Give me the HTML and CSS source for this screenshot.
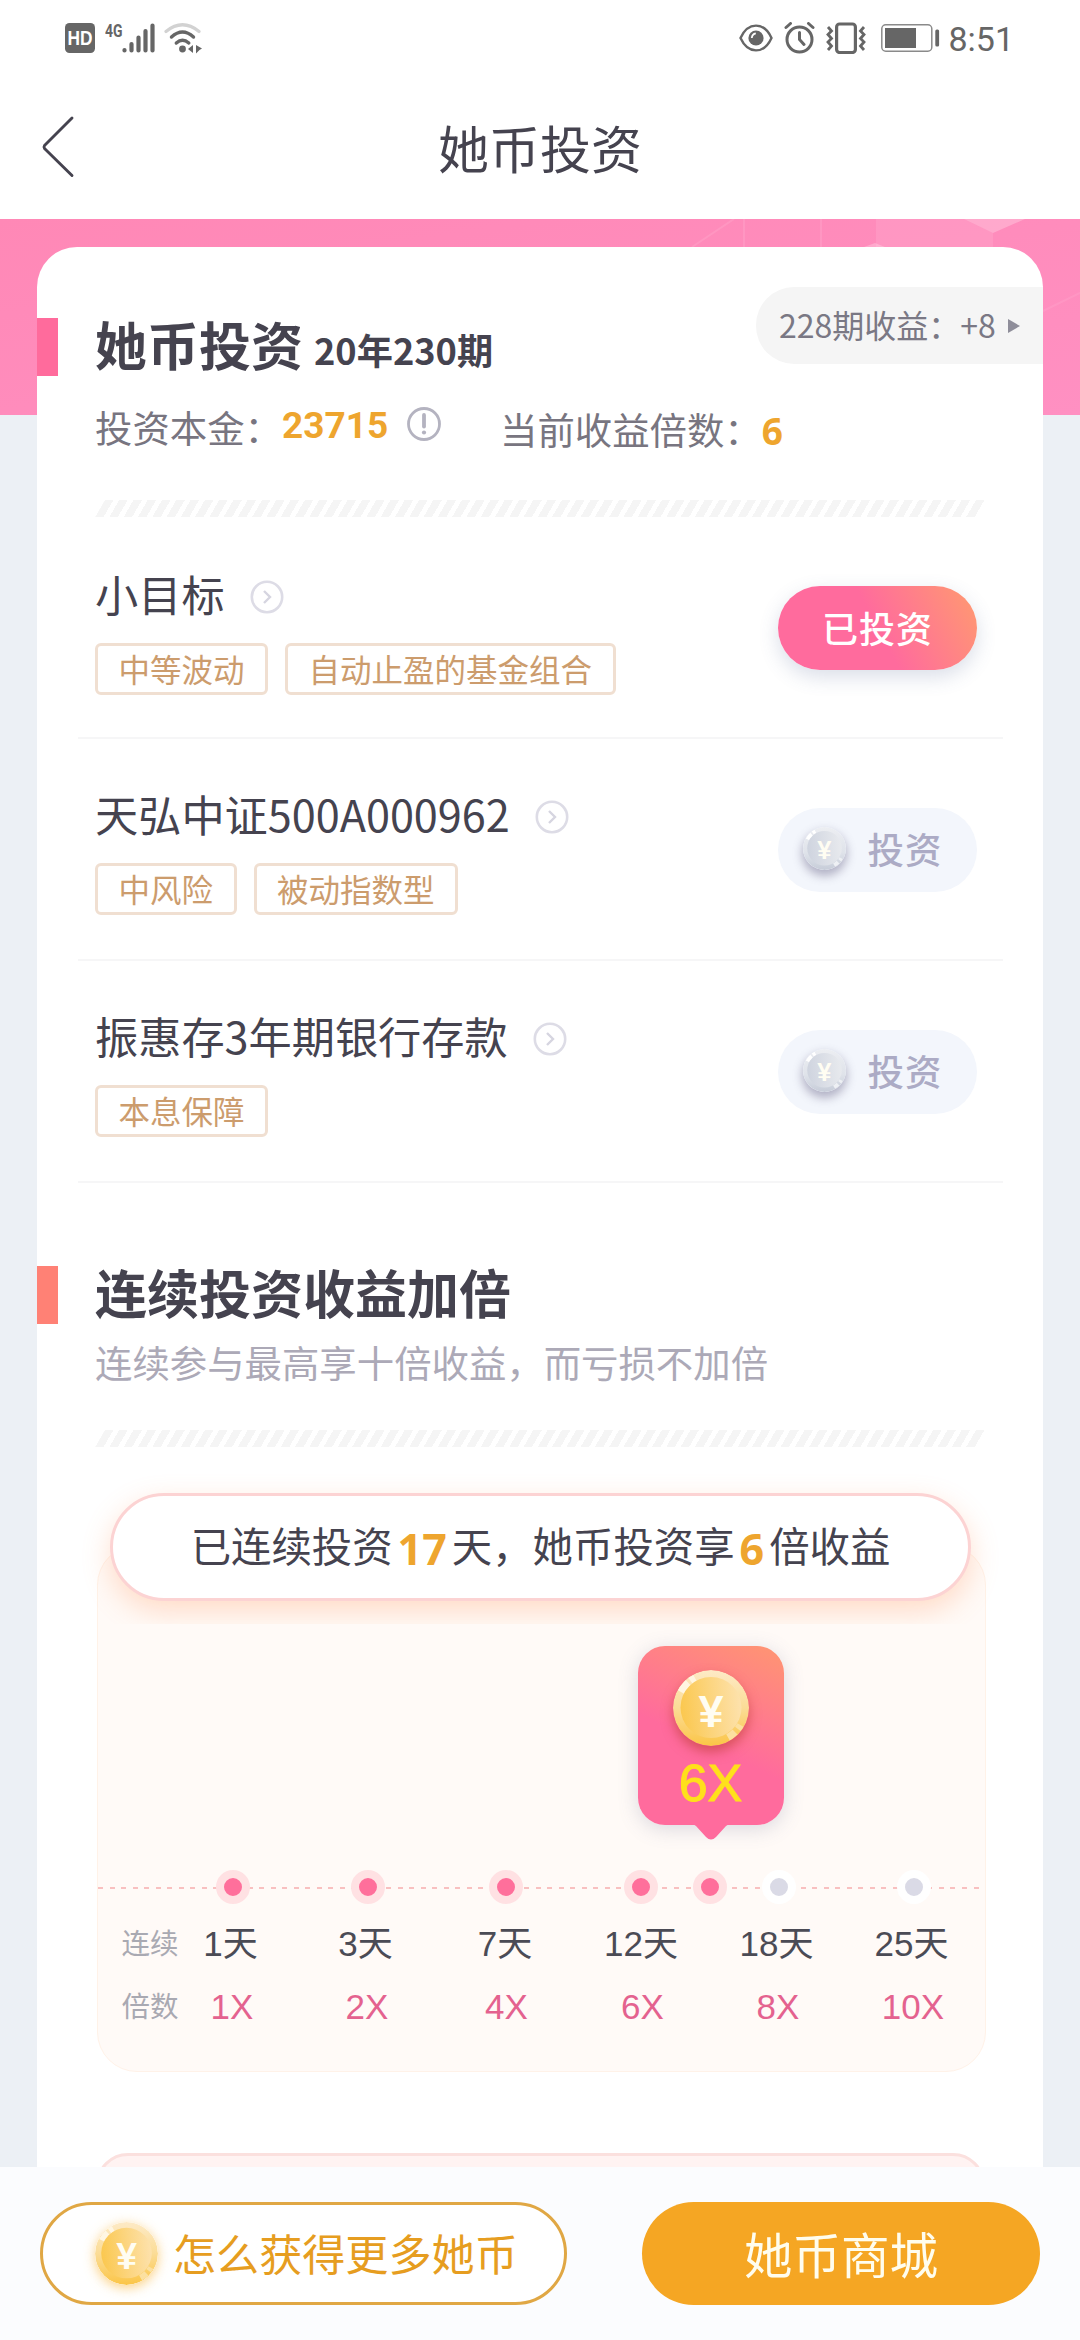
FILE: index.html
```html
<!DOCTYPE html>
<html lang="zh-CN">
<head>
<meta charset="utf-8">
<title>她币投资</title>
<link rel="stylesheet" href="styles.css">
</head>
<body>
<svg class="defs" width="0" height="0" aria-hidden="true">
  <defs>
    <linearGradient id="gold-rim" x1="0" y1="0" x2="0" y2="1"><stop offset="0" stop-color="#fdeac6"/><stop offset=".5" stop-color="#fbdc96"/><stop offset="1" stop-color="#fbc546"/></linearGradient>
    <linearGradient id="gold-face" x1="0" y1=".4" x2="1" y2=".3"><stop offset="0" stop-color="#fbc850"/><stop offset="1" stop-color="#fde2ae"/></linearGradient>
    <linearGradient id="silver-rim" x1="0" y1="0" x2="0" y2="1"><stop offset="0" stop-color="#eceef2"/><stop offset=".6" stop-color="#dfe3ea"/><stop offset="1" stop-color="#c6ccd8"/></linearGradient>
    <linearGradient id="silver-face" x1="0" y1=".4" x2="1" y2=".3"><stop offset="0" stop-color="#cfd4df"/><stop offset="1" stop-color="#e8eaee"/></linearGradient>
    <symbol id="coin-gold" viewBox="0 0 76 76">
      <circle cx="38" cy="38" r="38" fill="url(#gold-rim)"/>
      <path d="M8 22A34 34 0 0 1 15.200 12.700M17.500 10.800A34 34 0 0 1 22 8" fill="none" stroke="#fff6e2" stroke-width="7"/>
      <path d="M67.400 55A34 34 0 0 1 64.800 58.900M62 62A34 34 0 0 1 55 67.400" fill="none" stroke="#fce0a0" stroke-width="7"/>
      <circle cx="38" cy="37.500" r="30.500" fill="url(#gold-face)"/>
      <text class="coin-mark" x="38" y="56.500" text-anchor="middle">¥</text>
    </symbol>
    <symbol id="coin-silver" viewBox="0 0 76 76">
      <circle cx="38" cy="38" r="38" fill="url(#silver-rim)"/>
      <path d="M8 22A34 34 0 0 1 15.200 12.700M17.500 10.800A34 34 0 0 1 22 8" fill="none" stroke="#fff" stroke-width="7"/>
      <path d="M67.400 55A34 34 0 0 1 64.800 58.900M62 62A34 34 0 0 1 55 67.400" fill="none" stroke="#eef0f4" stroke-width="7"/>
      <circle cx="38" cy="37.500" r="30.500" fill="url(#silver-face)"/>
      <text class="coin-mark" x="38" y="56.500" text-anchor="middle">¥</text>
    </symbol>
    <symbol id="chevron-circle" viewBox="0 0 34 34">
      <circle cx="17" cy="17" r="15.200" fill="none" stroke="#dddce6" stroke-width="2.600"/>
      <path d="M14 11l6 6-6 6" fill="none" stroke="#d6d5e0" stroke-width="2.400"/>
    </symbol>
  </defs>
</svg>

<header class="status">
  <div class="status-left">
    <svg class="i-hd" width="30" height="30" viewBox="0 0 30 30"><rect width="30" height="30" rx="4.500" fill="#666"/><text class="hd-text" x="15" y="22" text-anchor="middle" textLength="25" lengthAdjust="spacingAndGlyphs">HD</text></svg>
    <svg class="i-signal" width="51" height="36" viewBox="0 -4 51 36"><text class="net-text" x="0" y="14.500" textLength="17.500" lengthAdjust="spacingAndGlyphs">4G</text><g stroke="#666" stroke-width="4.200" stroke-linecap="round"><path d="M19.500 28v.5M26.500 22v6.500M33.500 15.500v13M40.500 9v19.500M47.500 3.500v25"/></g></svg>
    <svg class="i-wifi" width="38" height="32" viewBox="0 0 38 32" fill="none" stroke-linecap="round"><path d="M2 9.500Q18.500-4 35 9.500" stroke="#d2d2d2" stroke-width="3.200"/><path d="M7.500 15Q18.500 5 29.500 15" stroke="#666" stroke-width="3.400"/><path d="M12.300 21Q18.500 15.500 24.800 21" stroke="#666" stroke-width="3.400"/><circle cx="18.500" cy="27" r="3.400" fill="#666"/><path d="M29 23v8l-5-4zM32 23l6 3.500-2.500 1.500-3.500 3.500z" fill="#666"/></svg>
  </div>
  <div class="status-right">
    <svg class="i-eye" width="34" height="28" viewBox="0 0 34 28"><path d="M1.500 14C9-2.500 25-2.500 32.500 14 25 30.500 9 30.500 1.500 14z" fill="none" stroke="#666" stroke-width="2.400"/><circle cx="17" cy="14" r="7.600" fill="#666"/><path d="M12.800 14q.4-4 4-4.600" fill="none" stroke="#fff" stroke-width="1.800"/></svg>
    <svg class="i-alarm" width="31" height="32" viewBox="0 0 31 32" fill="none" stroke="#666" stroke-width="3" stroke-linecap="round"><circle cx="15.500" cy="17.500" r="12.500"/><path d="M15.500 10.500v7l4.500 5M2 5.500l4.500-4M29 5.500l-4.500-4"/></svg>
    <svg class="i-vibrate" width="40" height="32" viewBox="0 0 40 32" fill="none" stroke="#666" stroke-width="3.200"><rect x="10.600" y="2" width="18.800" height="28.500" rx="3"/><path d="M2 5l3.500 4-3.500 3.500 3.500 4-3.500 3.500 3.500 4-3.500 4M38 5l-3.500 4 3.500 3.500-3.500 4 3.500 3.500-3.500 4 3.500 4" stroke-width="2.800"/></svg>
    <svg class="i-battery" width="59" height="28" viewBox="0 0 59 28"><rect x=".8" y=".8" width="50" height="26.400" rx="4" fill="none" stroke="#8a8a8a" stroke-width="1.500"/><rect x="4" y="4" width="31" height="20" fill="#666"/><rect x="54.300" y="5.500" width="3.800" height="17" rx="1.500" fill="#666"/></svg>
    <span class="clock">8:51</span>
  </div>
</header>

<nav class="nav">
  <svg class="back" width="34" height="64" viewBox="0 0 34 64" fill="none" stroke="#45434f" stroke-width="2.900" stroke-linecap="round" stroke-linejoin="round"><path d="M31 3L3.500 30.500Q2.500 32 3.500 33.500L31 60.500"/></svg>
  <h1 class="nav-title">她币投资</h1>
</nav>

<main class="page">
  <svg class="page-pattern" width="1080" height="196" viewBox="0 0 1080 196"><path d="M876 0h88l29 14v14H876z" fill="#fff" fill-opacity=".1"/><path d="M964 0h61l-32 14z" fill="#fff" fill-opacity=".26"/><path d="M864 28l11-4 10 4z" fill="#fff" fill-opacity=".25"/><path d="M692 28L734 0M744 0v28M821 0v28" stroke="#fff" stroke-opacity=".1" stroke-width="2"/><path d="M1043 92l37-18" stroke="#fff" stroke-opacity=".08" stroke-width="2"/></svg>
  <section class="card">
    <div class="card-head">
      <div class="heading heading-pink"><h2>她币投资</h2><span class="period">20年230期</span></div>
      <a class="last-gain"><span>228期收益：+8</span><svg width="12" height="16" viewBox="0 0 12 16"><path d="M0 1l12 7-12 7z" fill="#8f8e9a"/></svg></a>
    </div>
    <div class="facts">
      <div class="fact fact-principal"><span>投资本金：</span><b class="roboto">23715</b><svg width="36" height="36" viewBox="0 0 36 36"><circle cx="18" cy="18" r="15.500" fill="none" stroke="#b4b3c0" stroke-width="2.800"/><path d="M18 9v11.500" stroke="#b4b3c0" stroke-width="3.800" stroke-linecap="round"/><circle cx="18" cy="26.500" r="2.100" fill="#b4b3c0"/></svg></div>
      <div class="fact fact-multiple"><span>当前收益倍数：</span><b>6</b></div>
    </div>
    <div class="hatch"></div>

    <ul class="funds">
      <li class="fund">
        <div class="fund-info">
          <div class="fund-name"><h3>小目标</h3><svg width="34" height="34"><use href="#chevron-circle"/></svg></div>
          <div class="tags"><span>中等波动</span><span>自动止盈的基金组合</span></div>
        </div>
        <a class="invest invested">已投资</a>
      </li>
      <li class="fund">
        <div class="fund-info">
          <div class="fund-name"><h3>天弘中证500A000962</h3><svg width="34" height="34"><use href="#chevron-circle"/></svg></div>
          <div class="tags"><span>中风险</span><span>被动指数型</span></div>
        </div>
        <a class="invest"><svg class="coin-small" width="43" height="43"><use href="#coin-silver"/></svg>投资</a>
      </li>
      <li class="fund">
        <div class="fund-info">
          <div class="fund-name"><h3>振惠存3年期银行存款</h3><svg width="34" height="34"><use href="#chevron-circle"/></svg></div>
          <div class="tags"><span>本息保障</span></div>
        </div>
        <a class="invest"><svg class="coin-small" width="43" height="43"><use href="#coin-silver"/></svg>投资</a>
      </li>
    </ul>

    <div class="heading heading-coral"><h2>连续投资收益加倍</h2></div>
    <p class="note">连续参与最高享十倍收益，而亏损不加倍</p>
    <div class="hatch"></div>

    <div class="banner-wrap">
      <div class="banner"><span>已连续投资</span><b>17</b><span>天，她币投资享</span><b>6</b><span>倍收益</span></div>
    </div>
    <div class="streak">
      <div class="track">
        <i class="dot on" style="left:135px"></i>
        <i class="dot on" style="left:270px"></i>
        <i class="dot on" style="left:408px"></i>
        <i class="dot on" style="left:543px"></i>
        <i class="dot on" style="left:612px"></i>
        <i class="dot" style="left:681px"></i>
        <i class="dot" style="left:816px"></i>
        <div class="bubble">
          <svg width="76" height="76"><use href="#coin-gold"/></svg>
          <span>6X</span>
          <svg class="tail" width="40" height="17" viewBox="0 0 40 17"><path d="M0 0h40q-3 0-5 2L25 13q-5 5-10 0L5 2Q3 0 0 0z" fill="#ff6b9d"/></svg>
        </div>
      </div>
      <div class="steps days"><em>连续</em><span>1天</span><span>3天</span><span>7天</span><span>12天</span><span>18天</span><span>25天</span></div>
      <div class="steps rates"><em>倍数</em><span>1X</span><span>2X</span><span>4X</span><span>6X</span><span>8X</span><span>10X</span></div>
    </div>
    <div class="next-panel"></div>
  </section>
</main>

<footer class="actions">
  <a class="action action-earn"><svg width="63" height="63"><use href="#coin-gold"/></svg><span>怎么获得更多她币</span></a>
  <a class="action action-mall">她币商城</a>
</footer>
</body>
</html>
```
FILE: styles.css
```css
* { box-sizing: border-box; margin: 0; padding: 0; }
body {
  width: 1080px;
  height: 2340px;
  overflow: hidden;
  display: flex;
  flex-direction: column;
  background: #fff;
  color: #45434f;
  font-family: "Noto Sans CJK SC", "Noto Sans", sans-serif;
}
h1, h2, h3 { font-weight: 400; }
svg { display: block; flex: none; }
b, em, i { font-style: normal; }
ul { list-style: none; }
.defs { position: absolute; }
.coin-mark { font: 700 45px "Liberation Sans", sans-serif; fill: #fffdf2; }

/* status bar */
.status { height: 72px; flex: none; display: flex; justify-content: space-between; align-items: flex-start; padding: 22px 66px 0 65px; }
.status-left, .status-right { display: flex; align-items: flex-start; }
.i-hd { margin-top: 1px; }
.hd-text { font: 700 20px "Liberation Sans", sans-serif; fill: #fff; }
.i-signal { margin: -4px 0 0 10px; }
.net-text { font: 700 19px Roboto, sans-serif; fill: #666; }
.i-wifi { margin-left: 8px; }
.i-eye { margin-top: 2px; }
.i-alarm { margin-left: 11px; }
.i-vibrate { margin-left: 11px; }
.i-battery { margin: 2px 0 0 15px; }
.clock { margin-left: 8px; font: 400 34px/35px Roboto, sans-serif; color: #666; }

/* navigation */
.nav { height: 147px; flex: none; position: relative; display: flex; justify-content: center; }
.back { position: absolute; left: 41px; top: 43px; }
.nav-title { font-size: 51px; line-height: 74px; margin-top: 38px; }

/* page body */
.page {
  height: 1948px;
  flex: none;
  position: relative;
  overflow: hidden;
  padding: 28px 37px 0;
  background: linear-gradient(170deg, #ff88b6, #ff90c2) 0 0 / 100% 196px no-repeat #ecf0f5;
}
.page-pattern { position: absolute; left: 0; top: 0; }
.card { position: relative; height: 1990px; background: #fff; border-radius: 40px 40px 0 0; }
.card-head { display: flex; justify-content: space-between; align-items: flex-start; padding-top: 40px; }
.heading { display: flex; height: 58px; padding-left: 37px; border-left: 21px solid; }
.heading h2 { font-size: 52px; line-height: 51px; font-weight: 700; color: #45434f; }
.heading-pink { border-color: #ff6b9c; margin-top: 31px; }
.heading-coral { border-color: #ff8175; margin-top: 83px; }
.period { font-size: 36.200px; line-height: 62px; font-weight: 700; margin-left: 11px; }
.last-gain {
  display: flex;
  align-items: center;
  height: 77px;
  width: 287px;
  padding-left: 23px;
  border-radius: 38px 0 0 38px;
  background: #f5f5f5;
  color: #7a7884;
  font-size: 32px;
  line-height: 72px;
}
.last-gain span { width: 229px; white-space: nowrap; margin-top: -4px; }
.facts { display: flex; height: 124px; padding: 25px 0 0 58px; font-size: 37.400px; line-height: 53px; color: #787580; }
.fact { display: flex; }
.fact-principal { width: 405px; }
.fact-principal svg { margin: 5px 0 0 18px; }
.fact-multiple { padding-top: 2px; }
.fact b { color: #eea52e; font: 700 37px/55px "Noto Sans", sans-serif; }
.fact .roboto { font-family: Roboto, sans-serif; line-height: 49px; }
.hatch {
  width: 880px;
  height: 17px;
  margin-left: 63px;
  transform: skewX(-30deg);
  background: repeating-linear-gradient(90deg, #f5f5f5 0 8.500px, #fff 8.500px 14.280px);
}

/* fund list */
.fund { display: flex; justify-content: space-between; height: 222px; margin: 0 40px 0 41px; padding: 50px 26px 0 17px; border-bottom: 2px solid #f6f6f7; }
.fund-name { display: flex; height: 52px; }
.fund-name h3 { font-size: 43.200px; line-height: 52px; }
.fund-name svg { margin: 13px 0 0 25px; }
.fund + .fund .fund-info { margin-top: -2px; }
.tags { display: flex; gap: 17px; margin-top: 24px; }
.tags span { height: 52px; padding: 0 20.500px; border: 3px solid #f0dfd1; border-radius: 6px; font-size: 31.500px; line-height: 45px; color: #cc9c6d; }
.invest {
  display: flex;
  align-items: center;
  justify-content: center;
  width: 199px;
  height: 84px;
  margin-top: 19px;
  padding-right: 10px;
  border-radius: 42px;
  background: #f3f6fc;
  color: #acabc5;
  font-size: 36.500px;
  line-height: 76px;
  padding-bottom: 2px;
  font-weight: 500;
  letter-spacing: 1px;
}
.invested { padding-right: 0; font-size: 36px; background: linear-gradient(62deg, #ff6b9d 50%, #ff9674 95%); color: #fff; box-shadow: 0 7px 20px rgba(70, 90, 140, .2); }
.coin-small { margin: -2px 22px 0 0; border-radius: 50%; box-shadow: 0 5px 10px 1px rgba(100, 95, 130, .45); }

/* streak section */
.note { margin: 9px 0 0 58px; height: 97px; font-size: 37.400px; line-height: 59px; color: #aca9b7; }
.banner-wrap { position: relative; z-index: 1; height: 177px; overflow: hidden; padding: 46px 73px 0; }
.banner {
  display: flex;
  align-items: center;
  justify-content: center;
  height: 108px;
  width: 861px;
  border: 3px solid #fcd3d3;
  border-radius: 54px;
  background: #fff;
  box-shadow: 0 10px 28px rgba(255, 150, 90, .3);
  font-size: 40.400px;
  line-height: 96px;
}
.banner span { margin-top: -5px; }
.banner b { font: 700 43px/60px "Noto Sans", sans-serif; color: #eea52e; margin: 3px 5px 0; }
.streak {
  height: 527px;
  width: 889px;
  margin: -79px 0 0 59.500px;
  padding-top: 324px;
  border: 1.500px solid #fff2e8;
  border-radius: 40px;
  background: #fffaf7;
}
.track { position: relative; height: 34px; background: repeating-linear-gradient(90deg, #f9c0c0 0 5px, transparent 5px 11.520px) 0 17px / 100% 2px no-repeat; }
.dot { position: absolute; top: 0; width: 34px; height: 34px; margin-left: -17px; border-radius: 50%; border: 8px solid #fff; background: #dadae6; }
.on { border-color: #ffe1e3; background: #ff6f9b; }
.bubble {
  position: absolute;
  left: 540px;
  top: -224px;
  width: 146px;
  height: 179px;
  border-radius: 27px;
  background: linear-gradient(25deg, #ff6b9d 45%, #ff9275 95%);
  box-shadow: 0 4px 20px rgba(90, 100, 140, .22);
  display: flex;
  flex-direction: column;
  align-items: center;
  padding-top: 24px;
}
.bubble > svg:first-child { border-radius: 50%; box-shadow: 0 6px 12px rgba(190, 60, 50, .6); }
.bubble span { font: 400 52px/60px "Liberation Sans", sans-serif; color: #ffe01b; -webkit-text-stroke: 1px #ffe01b; margin-top: 7px; }
.tail { position: absolute; left: 53px; top: 178px; }
.steps { display: grid; grid-template-columns: 41px 136px 134px 145px 127px 144px 126px; align-items: center; height: 63px; margin-left: 24px; text-align: center; font: 400 35px/50px "Liberation Sans", "Noto Sans CJK SC", sans-serif; }
.days { margin-top: 8px; color: #4b4b55; }
.rates { color: #e4628f; }
.rates span { padding-left: 3px; }
.steps em { font-size: 28.500px; color: #a9a9b2; white-space: nowrap; text-align: left; }
.next-panel { width: 889px; height: 120px; margin: 81px 0 0 59px; border: 3px solid #fbe0de; border-radius: 32px; background: #fff3f2; }

/* bottom actions */
.actions { height: 173px; flex: none; display: flex; justify-content: space-between; padding: 35px 40px 0; background: #fbfcfe; }
.action { display: flex; align-items: center; height: 103px; border-radius: 52px; }
.action-earn { width: 527px; padding-left: 52px; border: 3px solid #e0a744; background: #fff; color: #e69d20; font-size: 43.100px; line-height: 92px; }
.action-earn svg { border-radius: 50%; box-shadow: 0 3px 12px rgba(250, 190, 80, .7); }
.action-earn span { margin: -3px 0 0 15px; }
.action-mall { width: 398px; justify-content: center; background: #f5a623; color: #fffdee; font-size: 48.500px; line-height: 98px; padding-bottom: 2px; }
```
